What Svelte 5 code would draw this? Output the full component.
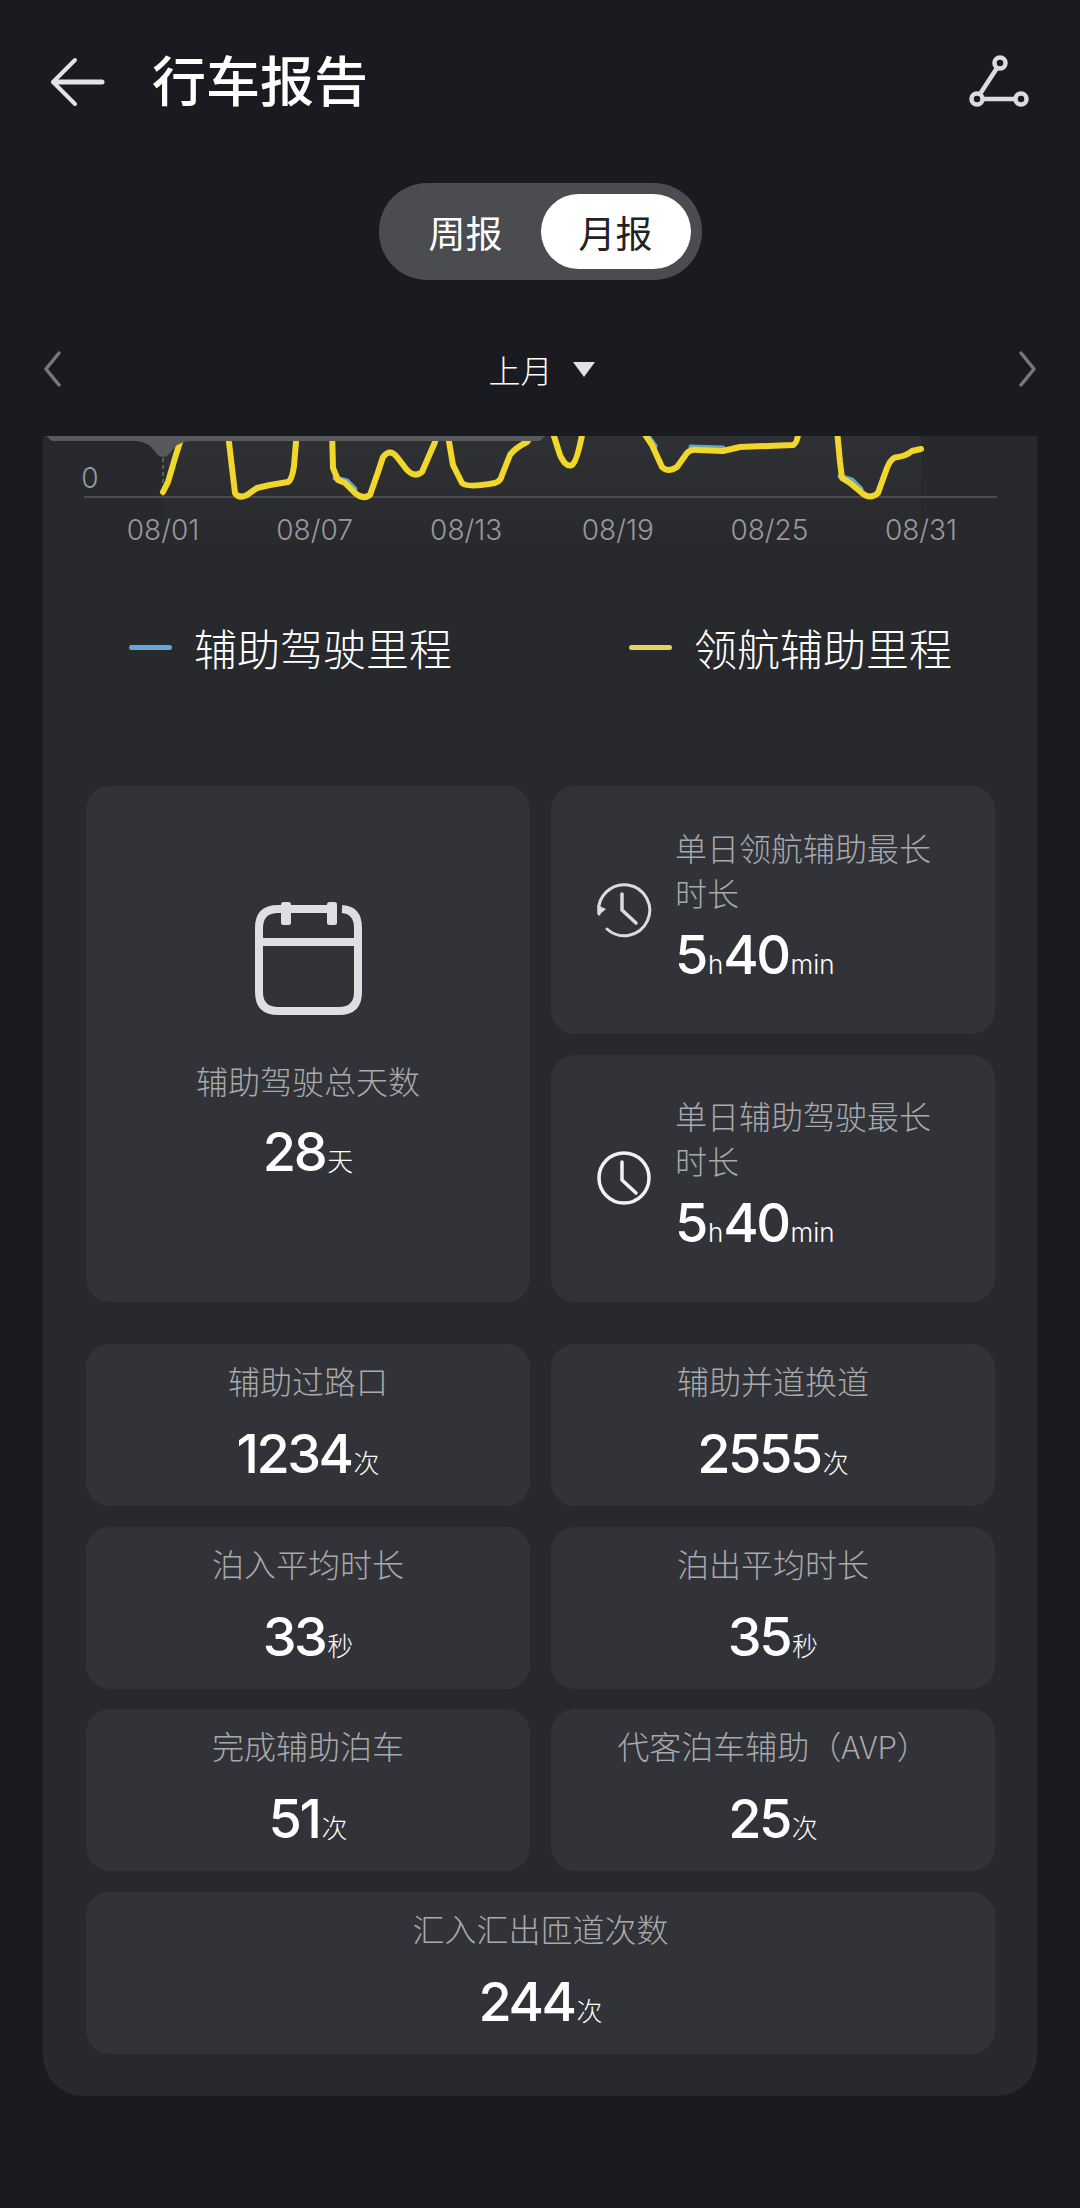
<script>
	const cn = ['08/01', '08/07', '08/13', '08/19', '08/25', '08/31'];
	const dates = cn.map((d, i) => ({ d, x: 120 + i * 151.6 }));

	// chart traces, in svg coords (page x - 43, page y - 436)
	const runs = [
		'M120 56 L125 46 L132 22 L137 6 L140 -6',
		'M185 -6 L186 6 L189 32 L192 57 Q196 63 204 59 L214 52 L227 49 L245 46 Q249 44 251 30 L254 -6',
		'M289 -6 L290 32 L295 44 L302 47 L312 57 Q320 64 327 59 L334 39 L340 21 Q347 12 354 21 L364 34 Q372 42 379 36 L392 6 L395 -6',
		'M404 -6 L410 29 L419 47 Q424 52 452 47 Q458 45 459 39 L467 19 Q472 12 484 6 L492 -6',
		'M509 -6 L517 19 Q523 32 529 29 Q534 26 540 -6',
		'M599 -6 L609 9 L619 31 Q625 37 634 31 L644 17 Q648 13 655 14 L680 15 L697 11 L750 9 Q754 8 756 -6',
		'M794 -6 L797 26 L799 42 L807 47 L819 57 Q827 64 835 57 L844 32 Q848 21 855 21 Q863 20 869 15 L878 13'
	];

	// places where the blue line peeks out from under the yellow one
	const blue = ['M292 42 L304 45 L312 53', 'M602 -4 L612 10', 'M797 40 L809 44 L818 53', 'M648 11 L680 12'];

	const stats = [
		{ label: '辅助过路口', value: '1234', unit: '次' },
		{ label: '辅助并道换道', value: '2555', unit: '次' },
		{ label: '泊入平均时长', value: '33', unit: '秒' },
		{ label: '泊出平均时长', value: '35', unit: '秒' },
		{ label: '完成辅助泊车', value: '51', unit: '次' },
		{ label: '代客泊车辅助（AVP）', value: '25', unit: '次' },
		{ label: '汇入汇出匝道次数', value: '244', unit: '次', wide: true }
	];
</script>

<div class="page">
	<header class="topbar">
		<svg class="back" width="56" height="50" viewBox="0 0 56 50" fill="none" stroke="#e4e4e6" stroke-width="4" stroke-linecap="round" stroke-linejoin="round">
			<path d="M25 3 L3 25 L25 47" />
			<path d="M4 25 H52" stroke-width="5" />
		</svg>
		<h1>行车报告</h1>
		<svg class="share" width="64" height="56" viewBox="0 0 64 56" fill="none" stroke="#dcdcde" stroke-width="4.5">
			<circle cx="32" cy="9" r="5.5" />
			<circle cx="9" cy="45" r="5.5" />
			<circle cx="53" cy="45" r="5.5" />
			<path d="M29 14 L12 40 M15 45 H47" />
		</svg>
	</header>

	<div class="tabs-wrap">
		<div class="tabs">
			<span class="tab">周报</span>
			<span class="tab on">月报</span>
		</div>
	</div>

	<div class="period">
		<svg width="20" height="36" viewBox="0 0 20 36" fill="none" stroke="#77787b" stroke-width="3.5" stroke-linecap="round" stroke-linejoin="round">
			<path d="M17 2 L4 18 L17 34" />
		</svg>
		<div class="period-label">上月<i class="caret"></i></div>
		<svg width="20" height="36" viewBox="0 0 20 36" fill="none" stroke="#77787b" stroke-width="3.5" stroke-linecap="round" stroke-linejoin="round">
			<path d="M3 2 L16 18 L3 34" />
		</svg>
	</div>

	<main class="card">
		<svg class="chart" width="994" height="124" viewBox="0 0 994 124">
			<defs>
				<linearGradient id="plotbg" x1="0" y1="0" x2="0" y2="1">
					<stop offset="0" stop-color="#fff" stop-opacity="0.035" />
					<stop offset="1" stop-color="#fff" stop-opacity="0" />
				</linearGradient>
			</defs>
			<rect x="120" y="0" width="758" height="124" fill="url(#plotbg)" />
			<line x1="41" y1="61" x2="954" y2="61" stroke="#4b4c4f" stroke-width="2" />
			<line x1="120" y1="22" x2="120" y2="60" stroke="#8b8c8e" stroke-width="1" stroke-dasharray="4 3" />
			{#each blue as d}
				<path {d} fill="none" stroke="#62a8c4" stroke-width="5" stroke-linecap="round" stroke-linejoin="round" />
			{/each}
			{#each runs as d}
				<path {d} fill="none" stroke="#f1d62c" stroke-width="6" stroke-linecap="round" stroke-linejoin="round" />
			{/each}
			<path d="M3 0 H502 L497 5 H146 Q134 6 127 17 Q120 25 113 17 Q106 6 94 5 H9 Z" fill="#58595b" />
			<text class="zero" x="47" y="52">0</text>
			{#each dates as t}
				<text class="tick" x={t.x} y="104">{t.d}</text>
			{/each}
		</svg>

		<div class="legend">
			<div class="legend-item first"><i class="swatch blue"></i>辅助驾驶里程</div>
			<div class="legend-item"><i class="swatch yellow"></i>领航辅助里程</div>
		</div>

		<section class="summary">
			<div class="tile total">
				<svg width="107" height="113" viewBox="0 0 107 113" fill="none" stroke="#dfdfe2" stroke-width="8">
					<path d="M87 7 Q103 8 103 26 V90 Q103 109 84 109 H23 Q4 109 4 90 V26 Q4 7 23 7 H78" />
					<path d="M4 40 H103" />
					<rect x="26" y="0" width="10" height="23" rx="2.5" fill="#dfdfe2" stroke="none" />
					<rect x="72" y="0" width="10" height="23" rx="2.5" fill="#dfdfe2" stroke="none" />
				</svg>
				<div class="label total-label">辅助驾驶总天数</div>
				<div class="value">28<small>天</small></div>
			</div>
			<div class="tile long">
				<svg width="56" height="56" viewBox="0 0 56 56" fill="none" stroke="#dcdcde" stroke-width="3" stroke-linecap="round">
					<path d="M3 32 A25.5 25.5 0 1 1 11 47" />
					<path d="M1 23 L10 27 L3 33 Z" fill="#dcdcde" stroke="none" />
					<path d="M26 12 V28 L40 41" stroke-width="3.5" />
				</svg>
				<div class="long-text">
					<div class="label">单日领航辅助最长时长</div>
					<div class="value">5<small>h</small>40<small>min</small></div>
				</div>
			</div>
			<div class="tile long">
				<svg width="56" height="56" viewBox="0 0 56 56" fill="none" stroke="#f2f2f3" stroke-width="3.5" stroke-linecap="round">
					<circle cx="28" cy="28" r="25" />
					<path d="M26 12 V30 L40 43" />
				</svg>
				<div class="long-text">
					<div class="label">单日辅助驾驶最长时长</div>
					<div class="value">5<small>h</small>40<small>min</small></div>
				</div>
			</div>
		</section>

		<section class="stats">
			{#each stats as s}
				<div class="tile stat" class:wide={s.wide}>
					<div class="label">{s.label}</div>
					<div class="value">{s.value}<small>{s.unit}</small></div>
				</div>
			{/each}
		</section>
	</main>
</div>

<style>
	:global(body) {
		margin: 0;
		background: #191b20;
	}

	.page {
		height: 2208px;
		background: #191b20;
		color: #fff;
		font-family: Inter, "Noto Sans CJK SC", sans-serif;
		overflow: hidden;
	}

	.topbar {
		height: 164px;
		display: flex;
		align-items: center;
		padding: 0 48px 1px 50px;
		box-sizing: border-box;
	}

	.back {
		margin-right: 46px;
	}

	h1 {
		margin: 0 0 6px;
		font-size: 54px;
		font-weight: 500;
		flex: 1;
		font-family: "Noto Sans CJK SC", sans-serif;
	}

	.tabs-wrap {
		display: flex;
		justify-content: center;
		margin-top: 19px;
	}

	.tabs {
		width: 323px;
		height: 97px;
		box-sizing: border-box;
		padding: 11px;
		border-radius: 48px;
		background: #4b4c4f;
		display: flex;
		justify-content: space-between;
		align-items: center;
		font-family: "Noto Sans CJK SC", sans-serif;
		font-size: 37px;
	}

	.tab {
		width: 151px;
		height: 75px;
		border-radius: 38px;
		display: flex;
		align-items: center;
		justify-content: center;
		margin-left: 1px;
	}

	.tab.on {
		background: #fff;
		color: #222;
		margin-left: 0;
	}

	.period {
		height: 156px;
		box-sizing: border-box;
		padding: 22px 42px 0;
		display: flex;
		align-items: center;
		justify-content: space-between;
	}

	.period-label {
		display: flex;
		align-items: center;
		font-size: 32px;
		font-family: "Noto Sans CJK SC", sans-serif;
		font-weight: 300;
		margin-left: 3px;
	}

	.caret {
		width: 0;
		height: 0;
		margin-left: 20px;
		border-left: 11px solid transparent;
		border-right: 11px solid transparent;
		border-top: 15px solid #e2e2e4;
	}

	.card {
		margin: 0 43px;
		height: 1660px;
		box-sizing: border-box;
		background: #28292d;
		border-radius: 0 0 40px 40px;
	}

	.chart {
		display: block;
	}

	.tick,
	.zero {
		fill: #98999c;
		font-size: 28px;
		font-family: Inter, sans-serif;
		font-weight: 300;
		text-anchor: middle;
	}

	.legend {
		height: 78px;
		margin-top: 48px;
		display: flex;
		font-size: 43px;
		font-weight: 300;
		font-family: "Noto Sans CJK SC", sans-serif;
		align-items: center;
		padding-left: 86px;
	}

	.legend-item {
		display: flex;
		align-items: center;
		gap: 22px;
		flex: none;
	}

	.legend-item.first {
		width: 500px;
	}

	.swatch {
		width: 43px;
		height: 5px;
		border-radius: 3px;
	}

	.swatch.blue {
		background: #67a6dc;
	}

	.swatch.yellow {
		background: #e8d15a;
	}

	.summary {
		margin: 100px 43px 0;
		display: grid;
		grid-template-columns: 444px 444px;
		grid-template-rows: 247.5px 247.5px;
		gap: 21px;
	}

	.tile {
		background: #323338;
		border-radius: 24px;
		box-sizing: border-box;
	}

	.label {
		font-size: 32px;
		line-height: 45px;
		color: #a8a9ac;
		font-weight: 300;
		font-family: "Noto Sans CJK SC", sans-serif;
	}

	.value {
		font-size: 54px;
		font-weight: 500;
		line-height: 60px;
		letter-spacing: -2.5px;
		white-space: nowrap;
	}

	.value small {
		font-size: 26px;
		font-weight: 300;
		letter-spacing: 0;
		margin-left: 2px;
	}

	.total {
		grid-row: 1 / 3;
		display: flex;
		flex-direction: column;
		align-items: center;
		padding-top: 116px;
	}

	.total svg,
	.long svg {
		flex: none;
	}

	.total-label {
		margin-top: 43px;
	}

	.total .value {
		margin-top: 19px;
	}

	.long {
		display: flex;
		align-items: center;
		padding-left: 45px;
		gap: 23px;
	}

	.long-text {
		width: 260px;
	}

	.long-text .value {
		margin-top: 10px;
	}

	.stats {
		margin: 42px 43px 0;
		display: grid;
		grid-template-columns: 444px 444px;
		grid-auto-rows: 162px;
		gap: 20.5px 21px;
	}

	.stat {
		text-align: center;
		padding-top: 14px;
	}

	.stat .value {
		margin-top: 21px;
	}

	.wide {
		grid-column: 1 / 3;
	}
</style>
